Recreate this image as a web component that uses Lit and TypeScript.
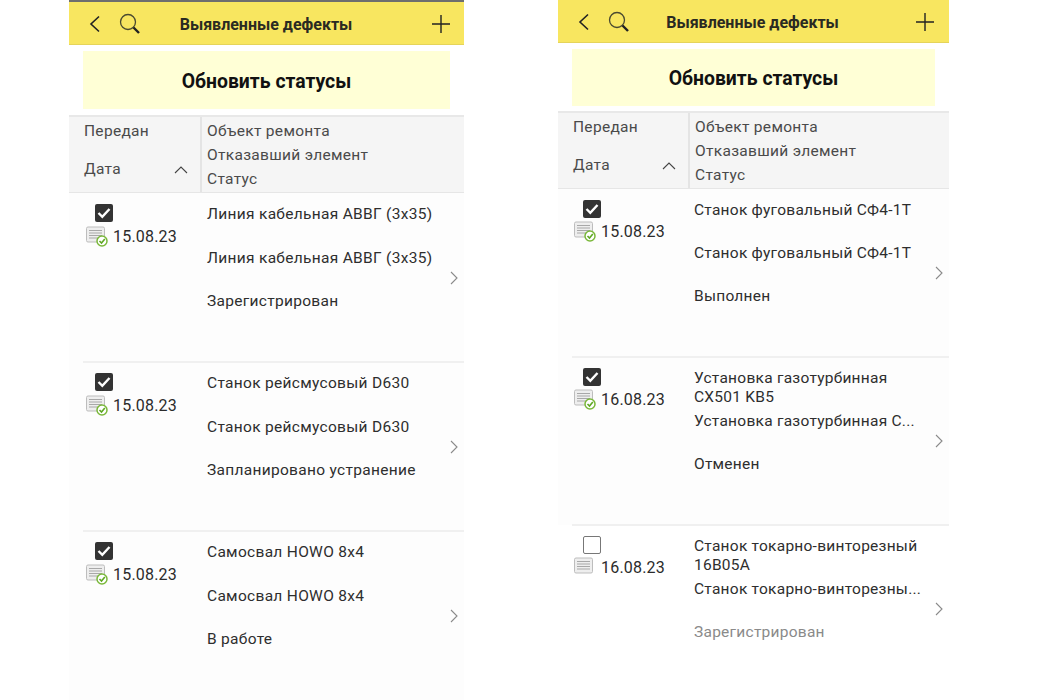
import { LitElement, html, css, svg } from "lit";
import { customElement, property } from "lit/decorators.js";

interface Row {
  date: string;
  lines: [string, string, string];
  checked: boolean;
  muted?: boolean;
}

const LEFT: Row[] = [
  { date: "15.08.23", lines: ["Линия кабельная АВВГ (3х35)", "Линия кабельная АВВГ (3х35)", "Зарегистрирован"], checked: true },
  { date: "15.08.23", lines: ["Станок рейсмусовый D630", "Станок рейсмусовый D630", "Запланировано устранение"], checked: true },
  { date: "15.08.23", lines: ["Самосвал HOWO 8x4", "Самосвал HOWO 8x4", "В работе"], checked: true },
];
const RIGHT: Row[] = [
  { date: "15.08.23", lines: ["Станок фуговальный СФ4-1Т", "Станок фуговальный СФ4-1Т", "Выполнен"], checked: true },
  { date: "16.08.23", lines: ["Установка газотурбинная СХ501 KB5", "Установка газотурбинная С...", "Отменен"], checked: true },
  { date: "16.08.23", lines: ["Станок токарно-винторезный 16В05А", "Станок токарно-винторезны...", "Зарегистрирован"], checked: false, muted: true },
];

const docIcon = (done: boolean) => svg`
  <svg class="doc" width="23" height="22" viewBox="0 0 23 22">
    <rect x="0.5" y="2" width="18" height="15" rx="1.5" fill="#eeeeee" stroke="#bdbdbd"/>
    <path d="M3 5.500h13M3 8h13M3 10.500h13M3 13h13" stroke="#a8a8a8" stroke-width="1" fill="none"/>
    ${done
      ? svg`<circle cx="16" cy="16" r="5" fill="#fff" stroke="#7ab83a" stroke-width="1.500"/>
            <path d="M13.500 16l2 2 3.300-4" stroke="#5fa824" stroke-width="1.600" fill="none"/>`
      : ""}
  </svg>`;

@customElement("phone-screen")
class PhoneScreen extends LitElement {
  @property({ type: Array }) rows: Row[] = [];
  @property({ type: Boolean, reflect: true }) narrow = false;

  static styles = css`
    :host {
      display: block;
      width: 395px;
      height: 700px;
      overflow: hidden;
      background: #fff;
      font-family: Roboto, "Liberation Sans", sans-serif;
      color: #2b2b2b;
      --bar-h: 43px;
      --btn-w: 367px;
      --btn-h: 58px;
      --btn-after: 6px;
      --col: 133px;
      --row-h: 169px;
      --slot: 43.5px;
      --text-top: 12px;
      --text-left: 5px;
      --text-ls: 0.3px;
      --date-left: 17px;
      --date-gap: 3px;
      --check-left: 9px;
      --head-gap: 5.200px;
    }
    :host([narrow]) {
      width: 391px;
      --btn-w: 363px;
      --btn-h: 57px;
      --btn-after: 5px;
      --col: 132px;
      --row-h: 168px;
      --slot: 43px;
      --text-ls: 0.25px;
      --text-left: 4px;
      --date-left: 16px;
      --date-gap: 2px;
      --check-left: 9px;
      --head-gap: 5px;
    }
    .topline { height: 2px; background: #6e6e6e; }
    :host([narrow]) .topline { display: none; }
    .bar {
      height: var(--bar-h);
      box-sizing: border-box;
      background: #f8e660;
      border-bottom: 1px solid #e5d45a;
      display: flex;
      align-items: center;
      padding: 1px 14px 0 20px;
    }
    :host([narrow]) .bar { padding-right: 15px; }
    .bar svg { display: block; flex: none; }
    .search { margin-left: 18px; }
    .title {
      flex: 1;
      text-align: center;
      font-weight: 700;
      font-size: 16px;
      color: #2a2a22;
      padding: 2px 41px 0 0;
    }
    :host([narrow]) .title { padding-top: 1px; }
    .btn-wrap { padding: 6px 14px var(--btn-after); display: flex; justify-content: center; }
    .btn {
      width: var(--btn-w);
      height: var(--btn-h);
      box-sizing: border-box;
      padding-top: 2px;
      background: #ffffd6;
      display: flex;
      align-items: center;
      justify-content: center;
      font-weight: 700;
      font-size: 19.400px;
      color: #111;
    }
    .head {
      height: 78px;
      box-sizing: border-box;
      background: #f5f5f5;
      border-top: 2px solid #e8e8e8;
      border-bottom: 1px solid #e6e6e6;
      display: grid;
      grid-template-columns: var(--col) 1fr;
      font-size: 15.500px;
      color: #4a4a4a;
      letter-spacing: 0.3px;
    }
    .head-date {
      border-right: 2px solid #e4e4e4;
      padding: 5px 12px 0 15px;
      display: flex;
      flex-direction: column;
      line-height: 19px;
    }
    .sort { display: flex; align-items: center; justify-content: space-between; margin-top: 19px; }
    .head-text {
      padding: 5px 0 0 5px;
      display: flex;
      flex-direction: column;
      gap: var(--head-gap);
      line-height: 19px;
    }
    .sep { height: 2px; margin: -1px 0 -1px 14px; background: #f0f0f0; position: relative; }
    .row {
      height: var(--row-h);
      box-sizing: border-box;
      background: #fdfdfd;
      display: grid;
      grid-template-columns: var(--col) minmax(0, 1fr) 30px;
    }
    :host([narrow]) .row:last-child { background: #fff; }
    .date-col {
      padding: 11px 0 0 var(--date-left);
      display: flex;
      flex-direction: column;
      align-items: flex-start;
    }
    .check {
      width: 18px;
      height: 18px;
      box-sizing: border-box;
      margin-left: var(--check-left);
      border-radius: 2px;
      display: flex;
      align-items: center;
      justify-content: center;
      background: #333;
    }
    .check.off { background: #fff; border: 1.500px solid #777; }
    .dateline {
      display: flex;
      align-items: center;
      margin-top: var(--date-gap);
      font-size: 16px;
      color: #2b2b2b;
      gap: 4px;
      letter-spacing: 0.2px;
    }
    .doc { display: block; }
    .text-col {
      padding: var(--text-top) 0 0 var(--text-left);
      display: grid;
      grid-template-rows: var(--slot) var(--slot) var(--slot);
      font-size: 15.500px;
      line-height: 19px;
      letter-spacing: var(--text-ls);
      color: #2e2e2e;
    }
    .nowrap { white-space: nowrap; }
    .muted { color: #8a8a8a; }
    .chev { display: flex; align-items: center; justify-content: center; padding-left: 10px; }
  `;

  render() {
    return html`
      <div class="topline"></div>
      <div class="bar">
        <svg width="12" height="18" viewBox="0 0 12 18"><path d="M10 1.500L2 9l8 7.500" fill="none" stroke="#222" stroke-width="1.600"/></svg>
        <svg class="search" width="22" height="22" viewBox="0 0 22 22">
          <circle cx="9" cy="9" r="7.500" fill="none" stroke="#4a4a30" stroke-width="1.300"/>
          <path d="M14.500 14.500L20 20" stroke="#222" stroke-width="2.400"/>
        </svg>
        <div class="title">Выявленные дефекты</div>
        <svg width="18" height="18" viewBox="0 0 18 18"><path d="M9 0v18M0 9h18" stroke="#222" stroke-width="1.400"/></svg>
      </div>
      <div class="btn-wrap"><div class="btn">Обновить статусы</div></div>
      <div class="head">
        <div class="head-date">
          <span>Передан</span>
          <div class="sort">
            <span>Дата</span>
            <svg width="14" height="8" viewBox="0 0 14 8"><path d="M1 7l6-6 6 6" fill="none" stroke="#444" stroke-width="1.100"/></svg>
          </div>
        </div>
        <div class="head-text">
          <span>Объект ремонта</span><span>Отказавший элемент</span><span>Статус</span>
        </div>
      </div>
      ${this.rows.map(
        (r, i) => html`
          ${i > 0 ? html`<div class="sep"></div>` : ""}
          <div class="row">
            <div class="date-col">
              <div class="check ${r.checked ? "" : "off"}">
                ${r.checked
                  ? html`<svg width="14" height="12" viewBox="0 0 14 12"><path d="M1.500 6l3.800 3.800L12.500 2" fill="none" stroke="#fff" stroke-width="2.400"/></svg>`
                  : ""}
              </div>
              <div class="dateline">${docIcon(r.checked)}<span>${r.date}</span></div>
            </div>
            <div class="text-col">
              <div>${r.lines[0]}</div>
              <div class="nowrap">${r.lines[1]}</div>
              <div class=${r.muted ? "muted" : ""}>${r.lines[2]}</div>
            </div>
            <div class="chev">
              <svg width="8" height="14" viewBox="0 0 8 14"><path d="M1 1l6 6-6 6" fill="none" stroke="#8a8a8a" stroke-width="1.100"/></svg>
            </div>
          </div>
        `
      )}
    `;
  }
}

@customElement("app-root")
export class AppRoot extends LitElement {
  static styles = css`
    :host {
      display: flex;
      width: 1050px;
      height: 700px;
      overflow: hidden;
      background: #fff;
      padding-left: 69px;
      box-sizing: border-box;
      gap: 94px;
    }
  `;
  render() {
    return html`
      <phone-screen .rows=${LEFT}></phone-screen>
      <phone-screen narrow .rows=${RIGHT}></phone-screen>
    `;
  }
}
void PhoneScreen;
